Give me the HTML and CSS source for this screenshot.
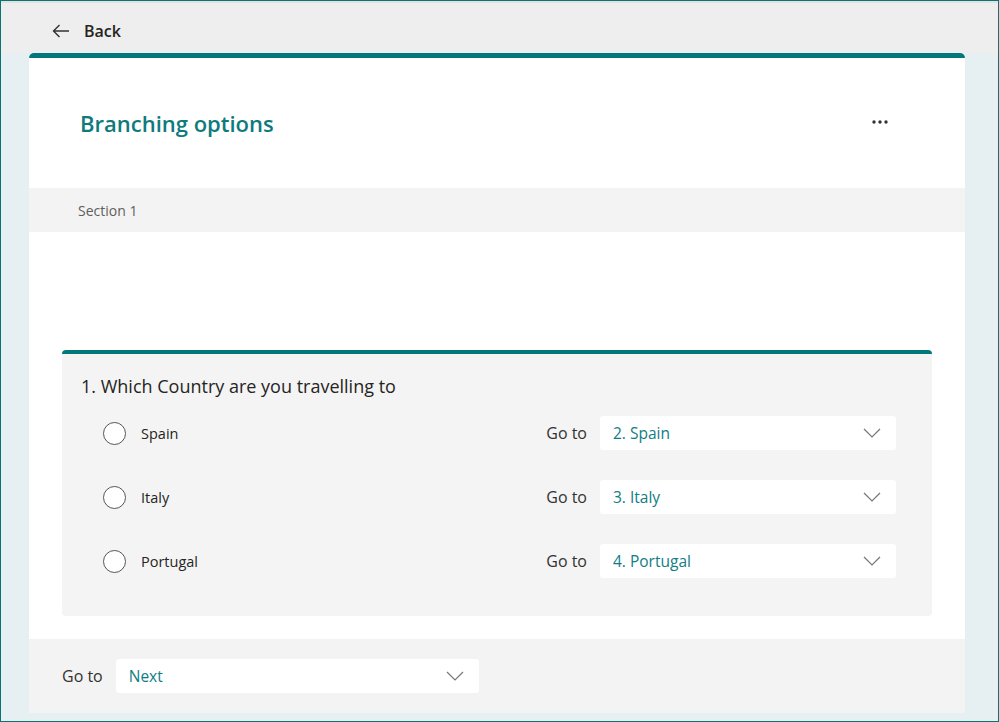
FILE: index.html
```html
<!DOCTYPE html>
<html lang="en">

<head>
    <title>Branching options</title>
    <meta charset="UTF-8">
    <meta name="viewport" content="width=device-width, initial-scale=1.0">
    <link rel="stylesheet" href="styles.css">
</head>

<body>
    <div class="frame">
        <div class="top-bar">
            <button type="button" class="back-button">
                <svg width="18" height="14" viewBox="0 0 18 14" fill="none" stroke="#333" stroke-width="1.4">
                    <path d="M17 7H1.5M7.5 1L1.5 7l6 6" />
                </svg>
                <span>Back</span>
            </button>
        </div>

        <div class="card">
            <div class="card-header">
                <h1 class="title">Branching options</h1>
                <svg class="more" width="16" height="4" viewBox="0 0 16 4" fill="#333">
                    <circle cx="2" cy="2" r="1.7" />
                    <circle cx="8" cy="2" r="1.7" />
                    <circle cx="14" cy="2" r="1.7" />
                </svg>
            </div>

            <div class="section-bar">Section 1</div>

            <div class="card-body">
                <div class="question">
                    <div class="question-title">1. Which Country are you travelling to</div>

                    <div class="option-row">
                        <span class="radio"></span>
                        <span class="option-label">Spain</span>
                        <span class="goto-label">Go to</span>
                        <div class="dropdown">
                            <span>2. Spain</span>
                            <svg class="chevron" width="18" height="10" viewBox="0 0 18 10" fill="none" stroke="#777" stroke-width="1.2"><path d="M1 1l8 8 8-8" /></svg>
                        </div>
                    </div>

                    <div class="option-row">
                        <span class="radio"></span>
                        <span class="option-label">Italy</span>
                        <span class="goto-label">Go to</span>
                        <div class="dropdown">
                            <span>3. Italy</span>
                            <svg class="chevron" width="18" height="10" viewBox="0 0 18 10" fill="none" stroke="#777" stroke-width="1.2"><path d="M1 1l8 8 8-8" /></svg>
                        </div>
                    </div>

                    <div class="option-row">
                        <span class="radio"></span>
                        <span class="option-label">Portugal</span>
                        <span class="goto-label">Go to</span>
                        <div class="dropdown">
                            <span>4. Portugal</span>
                            <svg class="chevron" width="18" height="10" viewBox="0 0 18 10" fill="none" stroke="#777" stroke-width="1.2"><path d="M1 1l8 8 8-8" /></svg>
                        </div>
                    </div>
                </div>
            </div>

            <div class="card-footer">
                <span class="goto-label">Go to</span>
                <div class="dropdown dropdown-wide">
                    <span>Next</span>
                    <svg class="chevron" width="18" height="10" viewBox="0 0 18 10" fill="none" stroke="#777" stroke-width="1.2"><path d="M1 1l8 8 8-8" /></svg>
                </div>
            </div>
        </div>
    </div>
</body>

</html>
```

FILE: styles.css
```css
body {
    margin: 0;
    font-family: "Open Sans", "Noto Sans", sans-serif;
    color: #252423;
}

.frame {
    width: 999px;
    height: 722px;
    box-sizing: border-box;
    border: 1px solid #0b7470;
    background: #e6eff1;
    overflow: hidden;
}

.top-bar {
    height: 52px;
    background: #eeeeee;
    border-top: 2px solid #e2e2e2;
    box-sizing: border-box;
    display: flex;
    align-items: center;
    padding: 5px 0 0 51px;
}

.back-button {
    display: flex;
    align-items: center;
    gap: 14px;
    background: none;
    border: none;
    padding: 0;
    font-family: inherit;
    font-size: 16px;
    font-weight: 600;
    color: #252423;
}

.card {
    margin: 0 33px 0 28px;
    border-top: 5px solid #03787c;
    border-radius: 5px 5px 0 0;
    background: #fff;
}

.card-header {
    height: 130px;
    display: flex;
    align-items: center;
    justify-content: space-between;
    padding: 0 77px 0 51px;
}

.title {
    margin: 0;
    font-size: 22px;
    font-weight: 600;
    color: #0e7a7d;
}

.more {
    margin-top: -3px;
}

.section-bar {
    height: 44px;
    background: #f3f3f3;
    display: flex;
    align-items: center;
    padding-left: 49px;
    font-size: 14px;
    color: #605e5c;
}

.card-body {
    padding: 118px 33px 23px 33px;
}

.question {
    background: #f4f4f4;
    border-top: 4px solid #03787c;
    border-radius: 4px;
    padding: 20px 36px 23px 19px;
}

.question-title {
    font-size: 18px;
    line-height: 24px;
    margin-bottom: 3px;
}

.option-row {
    display: flex;
    align-items: center;
    height: 64px;
}

.radio {
    width: 21px;
    height: 21px;
    border: 1px solid #555;
    border-radius: 50%;
    background: #fff;
    margin-left: 22px;
}

.option-label {
    font-size: 14.5px;
    margin-left: 15px;
    flex: 1;
}

.goto-label {
    font-size: 16px;
    color: #323130;
    margin-right: 13px;
}

.dropdown {
    width: 296px;
    height: 34px;
    box-sizing: border-box;
    background: #fff;
    border-radius: 3px;
    display: flex;
    align-items: center;
    justify-content: space-between;
    padding: 0 15px 0 13px;
    font-size: 15.5px;
    color: #0f7d85;
}

.dropdown-wide {
    width: 363px;
}

.card-footer {
    height: 74px;
    background: #f3f3f3;
    display: flex;
    align-items: center;
    padding-left: 33px;
}
```
